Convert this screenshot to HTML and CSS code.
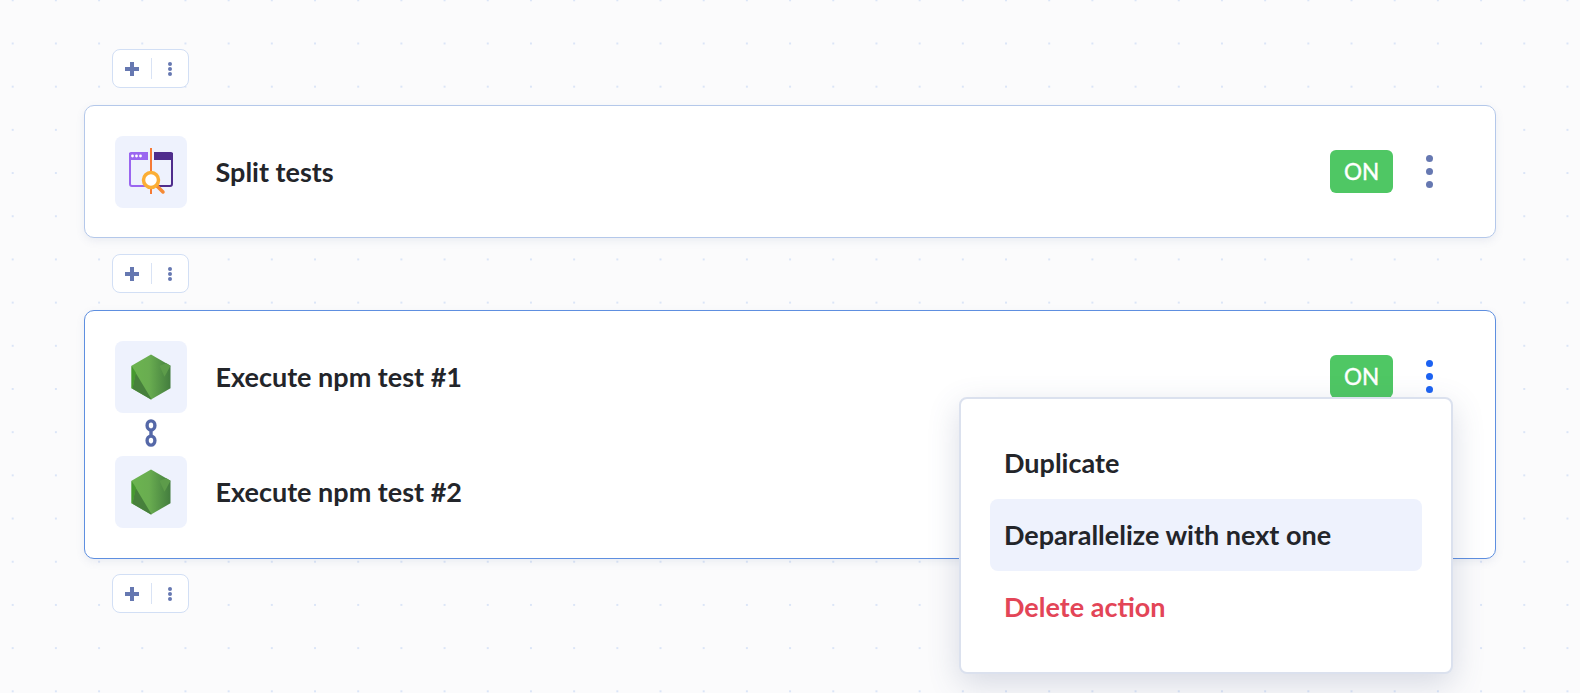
FILE: index.html
```html
<html lang="en">
  <head>
    <meta name="viewport" content="width=device-width, initial-scale=1" />
    <title>Workflow</title>
    <link rel="stylesheet" href="styles.css">
  </head>
  <body>
    <div class="workflow">
      <div class="adder">
        <svg class="plus" width="16" height="16" viewBox="0 0 16 16"><path d="M6 1h4v5h5v4h-5v5H6v-5H1V6h5z"/></svg>
        <span class="adder-sep"></span>
        <span class="adder-more"><i></i><i></i><i></i></span>
      </div>

      <div class="card">
        <div class="row">
          <div class="tile">
            <svg width="72" height="72" viewBox="0 0 72 72" fill="none">
              <path d="M15 17v31a2 2 0 0 0 2 2h17" stroke="#9a66f0" stroke-width="2"/>
              <path d="M14 18a2 2 0 0 1 2-2h17v8H14z" fill="#9a66f0"/>
              <circle cx="17.500" cy="20" r="1.400" fill="#fff"/>
              <circle cx="21.500" cy="20" r="1.400" fill="#fff"/>
              <circle cx="25.500" cy="20" r="1.400" fill="#fff"/>
              <path d="M57 17v31a2 2 0 0 1-2 2H40" stroke="#4f2d8c" stroke-width="2"/>
              <path d="M39 16h17a2 2 0 0 1 2 2v6H39z" fill="#4f2d8c"/>
              <path d="M36 12v46" stroke="#f57a35" stroke-width="2"/>
              <path d="M42 50l6 6" stroke="#f58a35" stroke-width="3.500" stroke-linecap="round"/>
              <circle cx="36" cy="44" r="7.500" fill="#fff" stroke="#fbae35" stroke-width="3.500"/>
            </svg>
          </div>
          <div class="name">Split tests</div>
          <div class="toggle">ON</div>
          <span class="more"><i></i><i></i><i></i></span>
        </div>
      </div>

      <div class="adder">
        <svg class="plus" width="16" height="16" viewBox="0 0 16 16"><path d="M6 1h4v5h5v4h-5v5H6v-5H1V6h5z"/></svg>
        <span class="adder-sep"></span>
        <span class="adder-more"><i></i><i></i><i></i></span>
      </div>

      <div class="card card-active">
        <div class="row">
          <div class="tile">
            <svg width="72" height="72" viewBox="0 0 72 72">
              <defs>
                <linearGradient id="node-a" x1="0" x2="1" y1="0" y2="0">
                  <stop offset="0" stop-color="#6cb450"/>
                  <stop offset="0.45" stop-color="#69ad50"/>
                  <stop offset="1" stop-color="#437d3e"/>
                </linearGradient>
              </defs>
              <path d="M36 13.500l19.500 11.250v22.500L36 58.500 16.500 47.250v-22.500z" fill="url(#node-a)"/>
              <path d="M20.500 31.500L36.500 58.200 36 58.500 17.500 47.800z" fill="#47803c"/>
              <path d="M16.500 24.750l4.500 7-3.500 16-1-0.500z" fill="#46992f"/>
              <path d="M55.500 24.750l-6 11-5-11 7-2.500z" fill="#5d9c4a"/>
            </svg>
          </div>
          <div class="name">Execute npm test #1</div>
          <div class="toggle">ON</div>
          <span class="more more-open"><i></i><i></i><i></i></span>
        </div>
        <div class="link">
          <svg width="12" height="28" viewBox="0 0 12 28" fill="none" stroke="#5568a8" stroke-width="3.400">
            <ellipse cx="6" cy="6.400" rx="3.900" ry="4.500"/>
            <ellipse cx="6" cy="21.600" rx="3.900" ry="4.500"/>
            <path d="M6 10v8"/>
          </svg>
        </div>
        <div class="row">
          <div class="tile">
            <svg width="72" height="72" viewBox="0 0 72 72">
              <path d="M36 13.500l19.500 11.250v22.500L36 58.500 16.500 47.250v-22.500z" fill="url(#node-a)"/>
              <path d="M20.500 31.500L36.500 58.200 36 58.500 17.500 47.800z" fill="#47803c"/>
              <path d="M16.500 24.750l4.500 7-3.500 16-1-0.500z" fill="#46992f"/>
              <path d="M55.500 24.750l-6 11-5-11 7-2.500z" fill="#5d9c4a"/>
            </svg>
          </div>
          <div class="name">Execute npm test #2</div>
        </div>

        <div class="menu">
          <div class="menu-item">Duplicate</div>
          <div class="menu-item menu-item-hover">Deparallelize with next one</div>
          <div class="menu-item menu-item-danger">Delete action</div>
        </div>
      </div>

      <div class="adder">
        <svg class="plus" width="16" height="16" viewBox="0 0 16 16"><path d="M6 1h4v5h5v4h-5v5H6v-5H1V6h5z"/></svg>
        <span class="adder-sep"></span>
        <span class="adder-more"><i></i><i></i><i></i></span>
      </div>
    </div>
  </body>
</html>
```
FILE: styles.css
```css
html,
body {
  margin: 0;
  height: 693px;
  overflow: hidden;
}
body {
  font-family: Lato, "Liberation Sans", sans-serif;
  background-color: #fbfbfc;
  background-image: radial-gradient(circle, #dbe5f7 1px, transparent 1.4px);
  background-size: 43.2px 43.2px;
  background-position: -8.9px -21.3px;
  color: #23252a;
}
.workflow {
  display: flex;
  flex-direction: column;
  width: 1412px;
  margin-left: 84px;
  padding-top: 49px;
}
.adder {
  display: flex;
  align-items: center;
  box-sizing: border-box;
  width: 77px;
  height: 39px;
  margin-left: 28px;
  padding-left: 11px;
  background-color: #fff;
  border: 1px solid #d2dff5;
  border-radius: 8px;
}
.plus {
  fill: #6678b1;
}
.adder-sep {
  width: 1px;
  height: 21px;
  margin-left: 11px;
  background-color: #d9e3f5;
}
.adder-more {
  display: flex;
  flex-direction: column;
  gap: 1px;
  margin-left: 16px;
}
.adder-more i {
  width: 4px;
  height: 4px;
  border-radius: 50%;
  background-color: #6678b1;
}
.card {
  position: relative;
  box-sizing: border-box;
  padding: 30px 30px 29px;
  background-color: #fff;
  border: 1px solid #b4c8ea;
  border-radius: 10px;
  box-shadow: 0 3px 8px rgba(90, 110, 160, 0.1);
  margin-top: 17px;
  margin-bottom: 16px;
}
.card-active {
  padding-bottom: 30px;
  margin-bottom: 15px;
  border-color: #5e8fe0;
}
.row {
  display: flex;
  align-items: center;
  height: 72px;
}
.tile {
  width: 72px;
  height: 72px;
  border-radius: 8px;
  background-color: #eef2fd;
}
.tile svg {
  display: block;
}
.name {
  flex: 1;
  margin-left: 28.5px;
  padding-bottom: 2px;
  font-size: 27px;
  font-weight: 700;
}
.toggle {
  width: 63px;
  height: 43px;
  margin-bottom: 2px;
  line-height: 43px;
  text-align: center;
  border-radius: 6px;
  background-color: #4fc764;
  color: #fff;
  font-size: 22.5px;
  font-weight: 400;
  -webkit-text-stroke: 0.4px #fff;
}
.more {
  display: flex;
  flex-direction: column;
  gap: 6px;
  margin-left: 33px;
  margin-right: 32px;
  margin-bottom: 2px;
}
.more i {
  width: 7px;
  height: 7px;
  border-radius: 50%;
  background-color: #6678b1;
}
.more-open i {
  background-color: #1c62f2;
}
.link {
  display: flex;
  justify-content: center;
  align-items: center;
  box-sizing: border-box;
  width: 72px;
  height: 43px;
  padding-bottom: 3px;
}
.link svg {
  display: block;
}
.menu {
  position: absolute;
  top: 86px;
  left: 874px;
  box-sizing: border-box;
  width: 494px;
  height: 277px;
  padding: 28px 29px;
  background-color: #fff;
  border: 2px solid #dbe1ee;
  border-radius: 8px;
  box-shadow: 0 10px 32px rgba(70, 85, 130, 0.2);
}
.menu-item {
  height: 72px;
  line-height: 72px;
  padding-left: 14px;
  border-radius: 8px;
  font-size: 27px;
  font-weight: 700;
}
.menu-item-hover {
  background-color: #eef2fd;
}
.menu-item-danger {
  color: #e34557;
}
```
